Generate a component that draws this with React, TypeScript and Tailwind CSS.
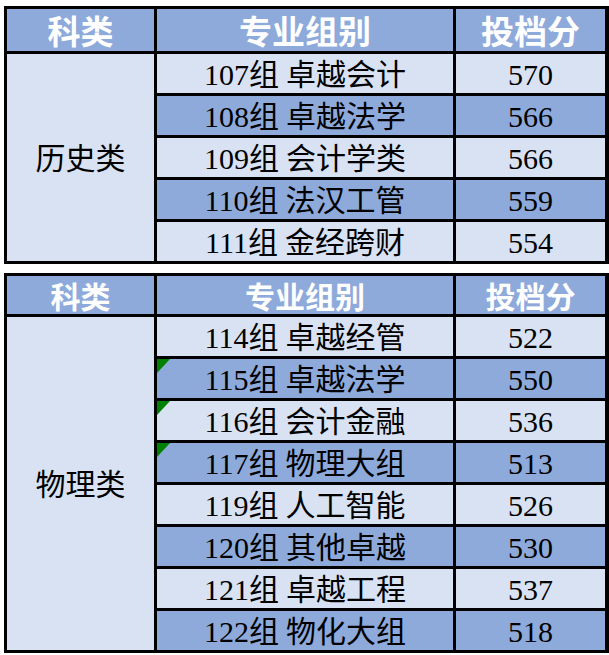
const LIGHT = "bg-[#d9e2f3]";
const BLUE = "bg-[#8eaadb]";

type Row = { group: string; name: string; score: string; flag?: boolean };

const history: Row[] = [
  { group: "107", name: "卓越会计", score: "570" },
  { group: "108", name: "卓越法学", score: "566" },
  { group: "109", name: "会计学类", score: "566" },
  { group: "110", name: "法汉工管", score: "559" },
  { group: "111", name: "金经跨财", score: "554" },
];

const physics: Row[] = [
  { group: "114", name: "卓越经管", score: "522" },
  { group: "115", name: "卓越法学", score: "550", flag: true },
  { group: "116", name: "会计金融", score: "536", flag: true },
  { group: "117", name: "物理大组", score: "513", flag: true },
  { group: "119", name: "人工智能", score: "526" },
  { group: "120", name: "其他卓越", score: "530" },
  { group: "121", name: "卓越工程", score: "537" },
  { group: "122", name: "物化大组", score: "518" },
];

const serif = "font-['Liberation_Serif','Noto_Sans_CJK_SC',serif]";
const sans = "font-['Noto_Sans_CJK_SC','Liberation_Sans',sans-serif]";

function Table({
  subject,
  rows,
  big,
}: {
  subject: string;
  rows: Row[];
  big?: boolean;
}) {
  const headText = big ? "text-[33px]" : "text-[30px]";
  return (
    <div
      className={`grid grid-cols-[147px_296px_149px] gap-[3px] bg-black p-[3px] ${
        big ? "grid-rows-[42px]" : "grid-rows-[38px]"
      } auto-rows-[39px]`}
    >
      {["科类", "专业组别", "投档分"].map((h) => (
        <div
          key={h}
          className={`${BLUE} ${sans} ${headText} flex items-center justify-center font-bold leading-none text-white`}
        >
          {h}
        </div>
      ))}
      <div
        className={`${LIGHT} ${serif} flex items-center justify-center pt-[2px] text-[30px] leading-none text-black`}
        style={{ gridRow: `2 / span ${rows.length}` }}
      >
        {subject}
      </div>
      {rows.map((r, i) => {
        // 浅色/深色交替
        const bg = i % 2 === 0 ? LIGHT : BLUE;
        return (
          <div key={r.group} className="contents">
            <div
              className={`${bg} ${serif} relative col-start-2 flex items-center justify-center pt-[2px] text-[30px] leading-none text-black`}
            >
              {r.flag && (
                <svg
                  className="absolute left-0 top-0"
                  width="13"
                  height="14"
                  viewBox="0 0 13 14"
                >
                  <polygon points="0,0 13,0 0,14" fill="#008000" />
                </svg>
              )}
              <span>{r.group}</span>
              <span>组</span>
              <span className="ml-[7px]">{r.name}</span>
            </div>
            <div
              className={`${bg} ${serif} flex items-center justify-center pt-[2px] text-[30px] leading-none text-black`}
            >
              {r.score}
            </div>
          </div>
        );
      })}
    </div>
  );
}

export default function App() {
  return (
    <div className="flex h-[655px] w-[609px] flex-col gap-[9px] bg-white pl-[4px] pt-[6px]">
      <Table subject="历史类" rows={history} big />
      <Table subject="物理类" rows={physics} />
    </div>
  );
}
